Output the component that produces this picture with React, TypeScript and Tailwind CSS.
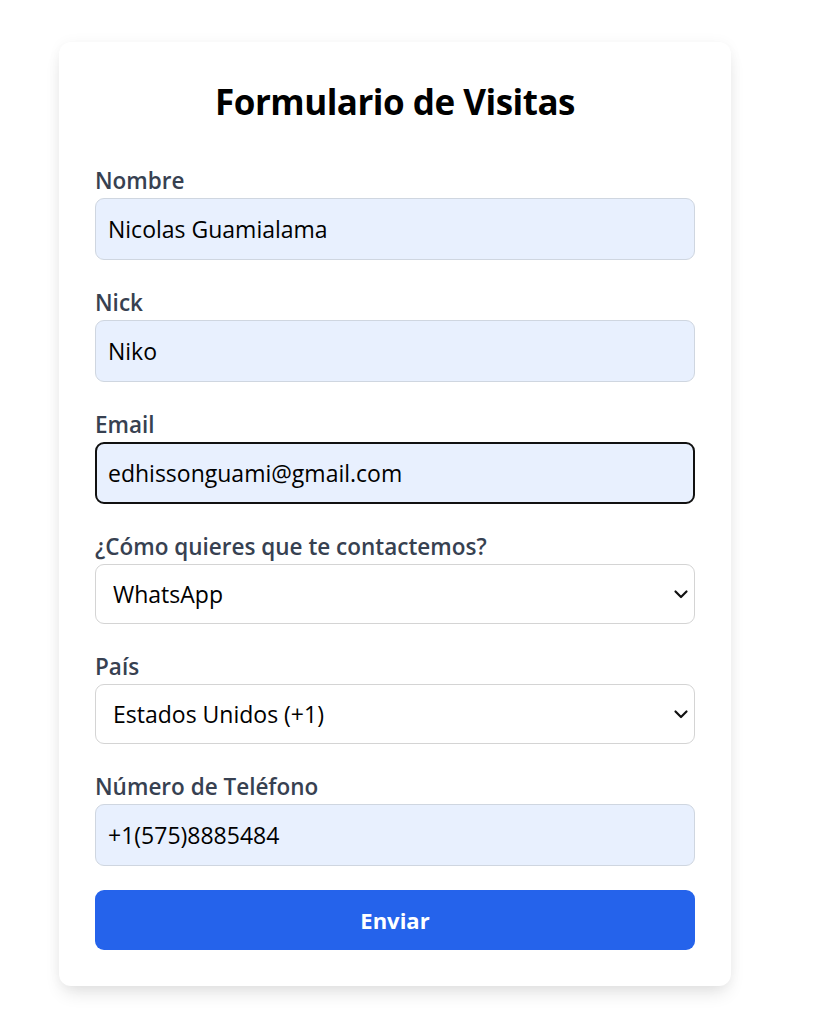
import { useState } from "react";

type FieldProps = {
  label: string;
  children: React.ReactNode;
};

function Field({ label, children }: FieldProps) {
  return (
    <div className="flex flex-col">
      <label className="mt-[4px] mb-[2px] text-[22.5px] leading-[30px] font-semibold text-[#374151]">
        {label}
      </label>
      {children}
    </div>
  );
}

function Chevron() {
  return (
    <svg
      className="pointer-events-none absolute right-[6px] top-1/2 h-[16px] w-[16px] -translate-y-1/2"
      viewBox="0 0 16 16"
      fill="none"
      stroke="#111"
      strokeWidth="2.2"
      strokeLinecap="round"
      strokeLinejoin="round"
    >
      <path d="M2.5 5.5L8 11l5.5-5.5" />
    </svg>
  );
}

export default function App() {
  const [nombre, setNombre] = useState("Nicolas Guamialama");
  const [nick, setNick] = useState("Niko");
  const [email, setEmail] = useState("edhissonguami@gmail.com");
  const [contacto, setContacto] = useState("WhatsApp");
  const [pais, setPais] = useState("US");
  const [telefono, setTelefono] = useState("+1(575)8885484");

  const inputClass =
    "h-[62px] w-full rounded-[9px] border-[1.5px] border-[#cfd6e0] bg-[#e8f0fe] px-[12px] text-[23px] text-black outline-none";
  const selectClass =
    "h-[60px] w-full appearance-none rounded-[9px] border-[1.5px] border-[#d4d4d4] bg-white pl-[17px] text-[23px] text-black outline-none";

  return (
    <div
      className="min-h-[1031px] w-full bg-white pt-[42px]"
      style={{ fontFamily: '"Open Sans", "Noto Sans", sans-serif' }}
    >
      <div className="ml-[59px] w-[672px] rounded-[12px] bg-white p-[36px] shadow-[0_10px_18px_-4px_rgba(0,0,0,0.12),0_0_14px_rgba(0,0,0,0.04)]">
        <h1 className="mb-[36px] text-center text-[35px] leading-[48px] font-bold tracking-[-0.5px] text-black">
          Formulario de Visitas
        </h1>
        <form className="flex flex-col gap-[24px]" onSubmit={(e) => e.preventDefault()}>
          <Field label="Nombre">
            <input className={inputClass} value={nombre} onChange={(e) => setNombre(e.target.value)} />
          </Field>
          <Field label="Nick">
            <input className={inputClass} value={nick} onChange={(e) => setNick(e.target.value)} />
          </Field>
          <Field label="Email">
            <input
              className="h-[62px] w-full rounded-[9px] border-[2.5px] border-[#111] bg-[#e8f0fe] px-[11px] text-[23px] text-black outline-none"
              value={email}
              onChange={(e) => setEmail(e.target.value)}
            />
          </Field>
          <Field label="¿Cómo quieres que te contactemos?">
            <div className="relative">
              <select className={selectClass} value={contacto} onChange={(e) => setContacto(e.target.value)}>
                <option>WhatsApp</option>
                <option>Email</option>
                <option>Llamada</option>
              </select>
              <Chevron />
            </div>
          </Field>
          <Field label="País">
            <div className="relative">
              <select className={selectClass} value={pais} onChange={(e) => setPais(e.target.value)}>
                <option value="US">Estados Unidos (+1)</option>
                <option value="EC">Ecuador (+593)</option>
                <option value="MX">México (+52)</option>
              </select>
              <Chevron />
            </div>
          </Field>
          <Field label="Número de Teléfono">
            <input className={inputClass} value={telefono} onChange={(e) => setTelefono(e.target.value)} />
          </Field>
          <button
            type="submit"
            className="h-[60px] w-full rounded-[9px] bg-[#2563eb] text-[22px] font-bold text-white"
          >
            Enviar
          </button>
        </form>
      </div>
    </div>
  );
}
